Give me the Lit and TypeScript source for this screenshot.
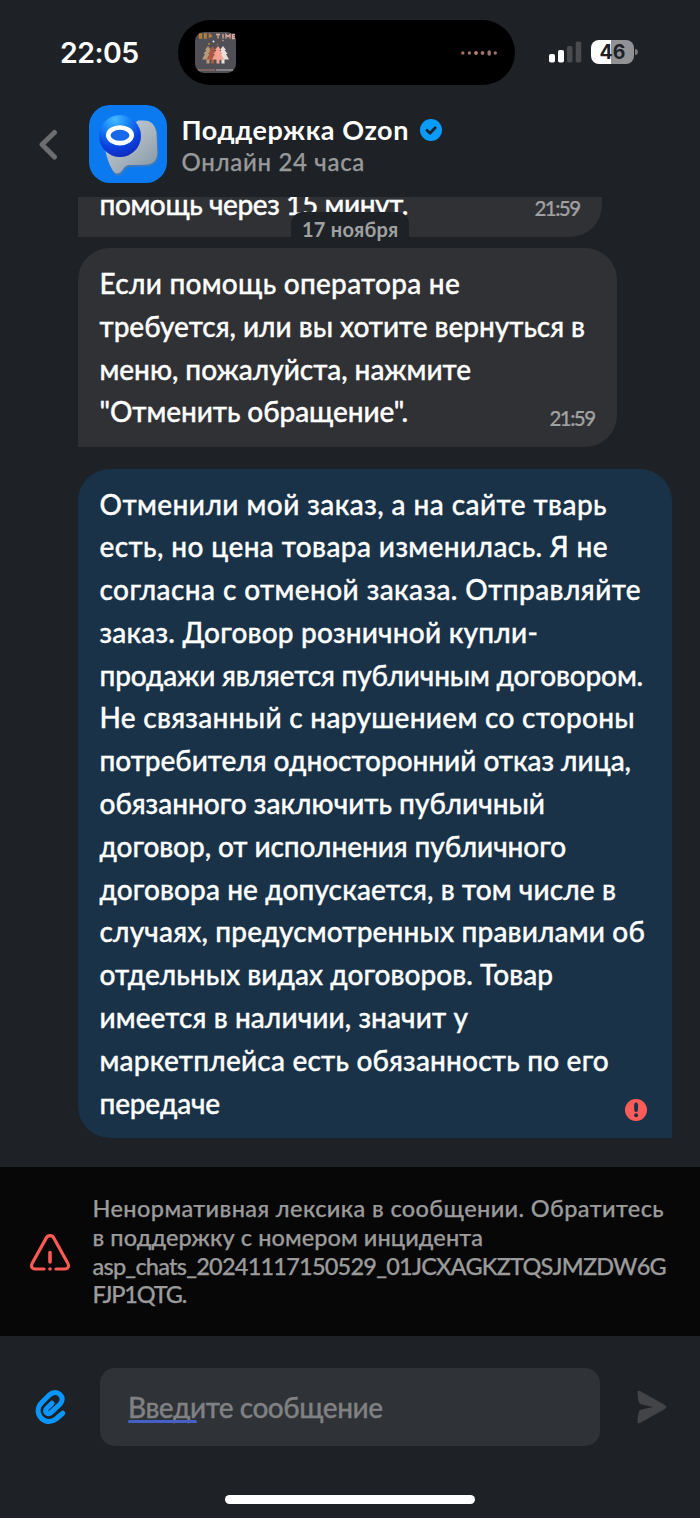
import { LitElement, html, svg, css } from "lit";
import { customElement } from "lit/decorators.js";

interface Line {
  text: string;
  width: number;
}

const line = (text: string, width: number): Line => ({ text, width });

const OPERATOR: Line[] = [
  line("Если помощь оператора не", 360),
  line("требуется, или вы хотите вернуться в", 485),
  line("меню, пожалуйста, нажмите", 371),
  line('"Отменить обращение".', 308),
];

const CUSTOMER: Line[] = [
  line("Отменили мой заказ, а на сайте тварь", 507),
  line("есть, но цена товара изменилась. Я не", 508),
  line("согласна с отменой заказа. Отправляйте", 541),
  line("заказ. Договор розничной купли-", 438),
  line("продажи является публичным договором.", 543),
  line("Не связанный с нарушением со стороны", 535),
  line("потребителя односторонний отказ лица,", 531),
  line("обязанного заключить публичный", 445),
  line("договор, от исполнения публичного", 466),
  line("договора не допускается, в том числе в", 516),
  line("случаях, предусмотренных правилами об", 545),
  line("отдельных видах договоров. Товар", 453),
  line("имеется в наличии, значит у", 368),
  line("маркетплейса есть обязанность по его", 509),
  line("передаче", 120),
];

const ALERT: Line[] = [
  line("Ненормативная лексика в сообщении. Обратитесь", 571),
  line("в поддержку с номером инцидента", 390),
  line("asp_chats_20241117150529_01JCXAGKZTQSJMZDW6G", 573),
  line("FJP1QTG.", 93),
];

/* One line of text whose tracking is adjusted to fill the given measure. */
@customElement("tracked-text")
class TrackedText extends LitElement {
  static properties = { text: {}, width: { type: Number } };
  declare text: string;
  declare width: number;

  static styles = css`
    :host {
      display: block;
      white-space: pre;
    }
    .run {
      display: inline-block;
    }
  `;

  updated() {
    const run = this.renderRoot.querySelector(".run") as HTMLElement;
    run.style.letterSpacing = "0px";
    const natural = run.getBoundingClientRect().width;
    const gap = (this.width + 0.5 - natural) / this.text.length;
    run.style.letterSpacing = `${gap.toFixed(3)}px`;
  }

  render() {
    return html`<span class="run">${this.text}</span>`;
  }
}

const tracked = (l: Line) =>
  html`<tracked-text .text=${l.text} .width=${l.width}></tracked-text>`;

const tree = (x: number, fill: string) => svg`
  <path transform="translate(${x} 0)" fill=${fill}
    d="M0 14l3 4h-1.400l3 4h-1.600l3 5.500h-4.500v4h-3v-4h-4.500l3-5.500h-1.600l3-4h-1.400z"/>`;

@customElement("app-root")
class AppRoot extends LitElement {
  static styles = css`
    :host {
      display: flex;
      flex-direction: column;
      width: 700px;
      height: 1518px;
      overflow: hidden;
      background: #1e2125;
      color: #fff;
      font-family: Lato, "Open Sans", sans-serif;
      font-weight: 500;
    }
    svg {
      display: block;
      flex: none;
    }
    .status {
      display: flex;
      height: 85px;
      padding-top: 20px;
      box-sizing: border-box;
      font-family: Inter, sans-serif;
    }
    .clock {
      width: 118px;
      padding-left: 60px;
      font-size: 28.5px;
      font-weight: 600;
      line-height: 65px;
    }
    .island {
      width: 337px;
      height: 65px;
      border-radius: 33px;
      background: #000;
      display: flex;
      align-items: center;
      justify-content: space-between;
      padding: 0 18px 0 17px;
      box-sizing: border-box;
    }
    .signal {
      margin: 21px 0 0 34px;
    }
    .battery {
      margin: 20px 0 0 9px;
      width: 43px;
      height: 24px;
      border-radius: 8px;
      background: linear-gradient(90deg, #fff 20px, #929295 20px);
      color: #1e2125;
      font-size: 19.5px;
      font-weight: 700;
      line-height: 25px;
      text-align: center;
    }
    .nub {
      margin: 29px 0 0 1px;
      width: 3px;
      height: 6px;
      border-radius: 0 3px 3px 0;
      background: #77787b;
    }
    .header {
      display: flex;
      height: 112px;
      padding: 20px 0 0 38px;
      box-sizing: border-box;
    }
    .back {
      margin-top: 24px;
    }
    .avatar {
      margin-left: 31px;
    }
    .titles {
      margin-left: 14.5px;
      padding-top: 9px;
    }
    .title {
      display: flex;
      align-items: center;
      gap: 11px;
      font-size: 27px;
      font-weight: 700;
      line-height: 32px;
      height: 32px;
    }
    .sub {
      color: #98999b;
      font-size: 24px;
      line-height: 32px;
      -webkit-text-stroke: 0.25px currentColor;
    }
    .chat {
      position: relative;
      flex: none;
      height: 970px;
      padding-left: 78px;
      box-sizing: border-box;
      overflow: hidden;
      display: flex;
      flex-direction: column;
      align-items: flex-start;
    }
    .bubble {
      display: flex;
      flex: none;
      justify-content: space-between;
      box-sizing: border-box;
      background: #303134;
      border-radius: 32px 32px 32px 0;
      font-size: 28px;
      line-height: 42.8px;
    }
    .previous {
      width: 523.5px;
      height: 40px;
      border-radius: 0 0 32px 0;
      padding: 0 22px 0 21.5px;
    }
    .previous .body {
      margin-top: -14px;
    }
    .previous .time {
      margin-top: -4px;
    }
    .operator {
      width: 538.5px;
      height: 199px;
      margin-top: 11px;
      padding: 14px 22px 0 21.5px;
      align-items: flex-start;
    }
    .operator .time {
      margin-top: 141px;
    }
    .customer {
      width: 593.5px;
      height: 669.5px;
      margin-top: 21.5px;
      padding: 14px 24.5px 0 21.5px;
      background: #193247;
      border-radius: 32px 32px 0 32px;
    }
    .body {
      width: 0;
      -webkit-text-stroke: 0.35px currentColor;
    }
    .failed {
      margin-top: 601px;
    }
    .time {
      color: #a0a1a3;
      font-size: 20.5px;
      line-height: 31px;
      -webkit-text-stroke: 0.2px currentColor;
    }
    .date {
      position: absolute;
      left: 291px;
      top: 15px;
      width: 118px;
      height: 36px;
      box-sizing: border-box;
      padding: 0 0 0 11px;
      border-radius: 12px;
      background: #1e2125;
      color: #a0a1a3;
      font-size: 20px;
      font-weight: 700;
      line-height: 34px;
    }
    .alert {
      display: flex;
      flex: none;
      align-items: center;
      height: 169px;
      padding-left: 29px;
      box-sizing: border-box;
      background: #070707;
      color: #9b9b9b;
      font-size: 23.5px;
      line-height: 28.9px;
      -webkit-text-stroke: 0.25px currentColor;
    }
    .alert-text {
      margin-left: 21.5px;
    }
    .composer {
      display: flex;
      align-items: center;
      height: 78px;
      margin-top: 32px;
      padding-left: 34px;
    }
    .field {
      display: flex;
      align-items: center;
      width: 500px;
      height: 78px;
      margin: 0 36px 0 32px;
      padding-left: 28px;
      box-sizing: border-box;
      border-radius: 15px;
      background: #2f3236;
      color: #808184;
      font-size: 28px;
      line-height: 40px;
      -webkit-text-stroke: 0.3px currentColor;
    }
    .hint {
      position: relative;
    }
    .mark {
      position: absolute;
      left: 0;
      top: 32.500px;
      width: 69px;
      height: 3.500px;
      border-radius: 2px;
      background: #4560c4;
    }
    .home {
      width: 250px;
      height: 9px;
      margin: 48.500px 0 0 225px;
      border-radius: 5px;
      background: #fff;
    }
  `;

  render() {
    return html`
      <div class="status">
        <div class="clock">${tracked(line("22:05", 78))}</div>
        <div class="island">
          <svg width="41" height="41" viewBox="0 0 41 41">
            <rect width="41" height="41" rx="9" fill="#514f56" />
            <g fill="none" stroke-width="1.300">
              <path stroke="#b98239" d="M4.500 2v4h2V2zM4.500 4h2M12 2h-2.500v4H12M9.500 4H12M14.500 6V2l2 2-2 1" />
              <path stroke="#dfa99d" d="M21 2.500h4M23 2.500v4M28 2v4.500M31 6.500V2.500l2 2 2-2v4M40 2.500h-2.500v4H40M37.500 4.500H40" />
            </g>
            ${tree(13, "#b59a7e")}${tree(28, "#eadfd8")}${tree(17.5, "#aa583f")}${tree(23, "#f2a292")}
            <circle cx="18.500" cy="9.500" r="1" fill="#eee" />
            <circle cx="28" cy="8.500" r=".8" fill="#e7a092" />
            <circle cx="14" cy="12" r=".9" fill="#c78d38" />
            <circle cx="22.500" cy="12.500" r=".8" fill="#b66a43" />
            <path d="M3 38h17" stroke="#ad7a73" stroke-width="1" />
            <path d="M21 38h17" stroke="#b9b5b8" stroke-width="1" />
          </svg>
          <svg width="36" height="8" viewBox="0 0 36 8" fill="#9c7269">
            <circle cx="1.800" cy="4" r="1.700" /><circle cx="8.400" cy="4" r="1.700" />
            <circle cx="15" cy="4" r="1.900" fill="#b5806f" /><circle cx="21.500" cy="4" r="1.900" />
            <rect x="26.500" y="1.200" width="3.400" height="5.600" rx="1.700" />
            <circle cx="34.300" cy="4" r="1.700" />
          </svg>
        </div>
        <svg class="signal" width="33" height="22" viewBox="0 0 33 22">
          <rect y="13" width="6" height="8.500" rx="1.800" fill="#fff" />
          <rect x="9" y="9" width="6" height="12.500" rx="1.800" fill="#fff" />
          <rect x="18" y="5" width="5.500" height="16.500" rx="1.800" fill="#4a4b4f" />
          <rect x="26.700" y="0.500" width="5.500" height="21" rx="1.800" fill="#4a4b4f" />
        </svg>
        <div class="battery">46</div>
        <div class="nub"></div>
      </div>

      <div class="header">
        <svg class="back" width="20" height="32" viewBox="0 0 20 32">
          <path d="M16.500 3.500L4 15.500l12.500 12.500" fill="none" stroke="#6c6d6f" stroke-width="5" stroke-linecap="round" stroke-linejoin="round" />
        </svg>
        <svg class="avatar" width="78" height="78" viewBox="0 0 78 78">
          <defs>
            <linearGradient id="speech" x1="0" y1="0" x2=".8" y2="1">
              <stop offset="0" stop-color="#c5d0d9" /><stop offset=".6" stop-color="#a7b4be" /><stop offset="1" stop-color="#8799a8" />
            </linearGradient>
            <radialGradient id="ball" cx=".38" cy=".1" r=".95">
              <stop offset="0" stop-color="#45b9ff" /><stop offset=".35" stop-color="#1683f5" />
              <stop offset=".7" stop-color="#0b42df" /><stop offset="1" stop-color="#1226b8" />
            </radialGradient>
          </defs>
          <rect width="78" height="78" rx="21" fill="#0b7af0" />
          <path transform="translate(1 1.300)" fill="#567b9f" opacity=".7" d="M49 15.500h6c7 0 11 4 12.500 12l.8 20c0 8-4 12.500-12 12.700l-15.500.4c-3.500 0-5 1.500-7 4.500-3 5-7.500 5.500-10 1.500-4-6-6-14-7.800-22z" />
          <path fill="url(#speech)" d="M49 15.500h6c7 0 11 4 12.500 12l.8 20c0 8-4 12-12 12.200l-15.500.4c-3.500 0-5 1.500-7 4.500-3 5-7.500 5-10 1-4-6-6-13.500-7.800-21.500z" />
          <circle cx="31" cy="31" r="21" fill="url(#ball)" />
          <ellipse cx="31" cy="30.300" rx="11.700" ry="7.800" fill="#1769e9" stroke="#fff" stroke-width="4.600" />
        </svg>
        <div class="titles">
          <div class="title">
            ${tracked(line("Поддержка Ozon", 227))}
            <svg width="22" height="22" viewBox="0 0 22 22">
              <circle cx="11" cy="11" r="11" fill="#0a9bff" />
              <path d="M7 11.300l3 3 5.200-5.500" fill="none" stroke="#1e2125" stroke-width="2.700" stroke-linecap="round" stroke-linejoin="round" />
            </svg>
          </div>
          <div class="sub">${tracked(line("Онлайн 24 часа", 183))}</div>
        </div>
      </div>

      <div class="chat">
        <div class="bubble previous">
          <div class="body">${tracked(line("помощь через 15 минут.", 308))}</div>
          <div class="time">${tracked(line("21:59", 44.5))}</div>
        </div>
        <div class="bubble operator">
          <div class="body">${OPERATOR.map(tracked)}</div>
          <div class="time">${tracked(line("21:59", 44.5))}</div>
        </div>
        <div class="bubble customer">
          <div class="body">${CUSTOMER.map(tracked)}</div>
          <svg class="failed" width="22" height="48" viewBox="0 0 22 48">
            <circle cx="11" cy="26" r="11" fill="#ff5b58" />
            <rect x="9.200" y="18.500" width="3.800" height="9.500" rx="1.900" fill="#193247" />
            <circle cx="11.100" cy="31.300" r="2" fill="#193247" />
          </svg>
        </div>
        <div class="date">${tracked(line("17 ноября", 96))}</div>
      </div>

      <div class="alert">
        <svg width="42" height="38" viewBox="0 0 42 38" fill="none" stroke="#ff5b53" stroke-width="3.200" stroke-linecap="round" stroke-linejoin="round">
          <path d="M15 36H6.500C2.500 36 1.500 33 3.200 30.300L17.200 5.100C19 1.800 23 1.800 24.800 5.100L38.800 30.300C40.500 33 39.500 36 35.500 36H27" />
          <path d="M21 19.500V29M21 36v.01" stroke-width="3.600" />
        </svg>
        <div class="alert-text">${ALERT.map(tracked)}</div>
      </div>

      <div class="composer">
        <svg width="34" height="38" viewBox="0 0 34 38">
          <path d="M18 15.200L12.800 20.300C9.800 23.400 13.600 27.600 17 24.500L26.200 16C32.200 9.800 23.500 0 15.300 7L8 14.200C3.600 18.600 3 24.500 6.300 29C10.500 34.500 17 34.800 22 31L28.700 25.200" fill="none" stroke="#0a96ff" stroke-width="5.100" stroke-linecap="round" stroke-linejoin="round" />
        </svg>
        <div class="field">
          <div class="hint">
            <div class="mark"></div>
            ${tracked(line("Введите сообщение", 254))}
          </div>
        </div>
        <svg width="32" height="34" viewBox="0 0 32 34">
          <path d="M1.500 2.500c0-2 1.500-2.200 3-1.200L28 14.500c3 1.700 3 3.300 0 5L4.500 32.700c-1.500 1-3 .6-3-1.200 0-3 .5-6 1.300-9.500.5-1.600 1.300-2.100 3-2.500L17 17 5.800 14.500c-1.700-.4-2.500-1-3-2.600C2 9 1.500 5.500 1.500 2.500z" fill="#434448" />
        </svg>
      </div>
      <div class="home"></div>
    `;
  }
}
